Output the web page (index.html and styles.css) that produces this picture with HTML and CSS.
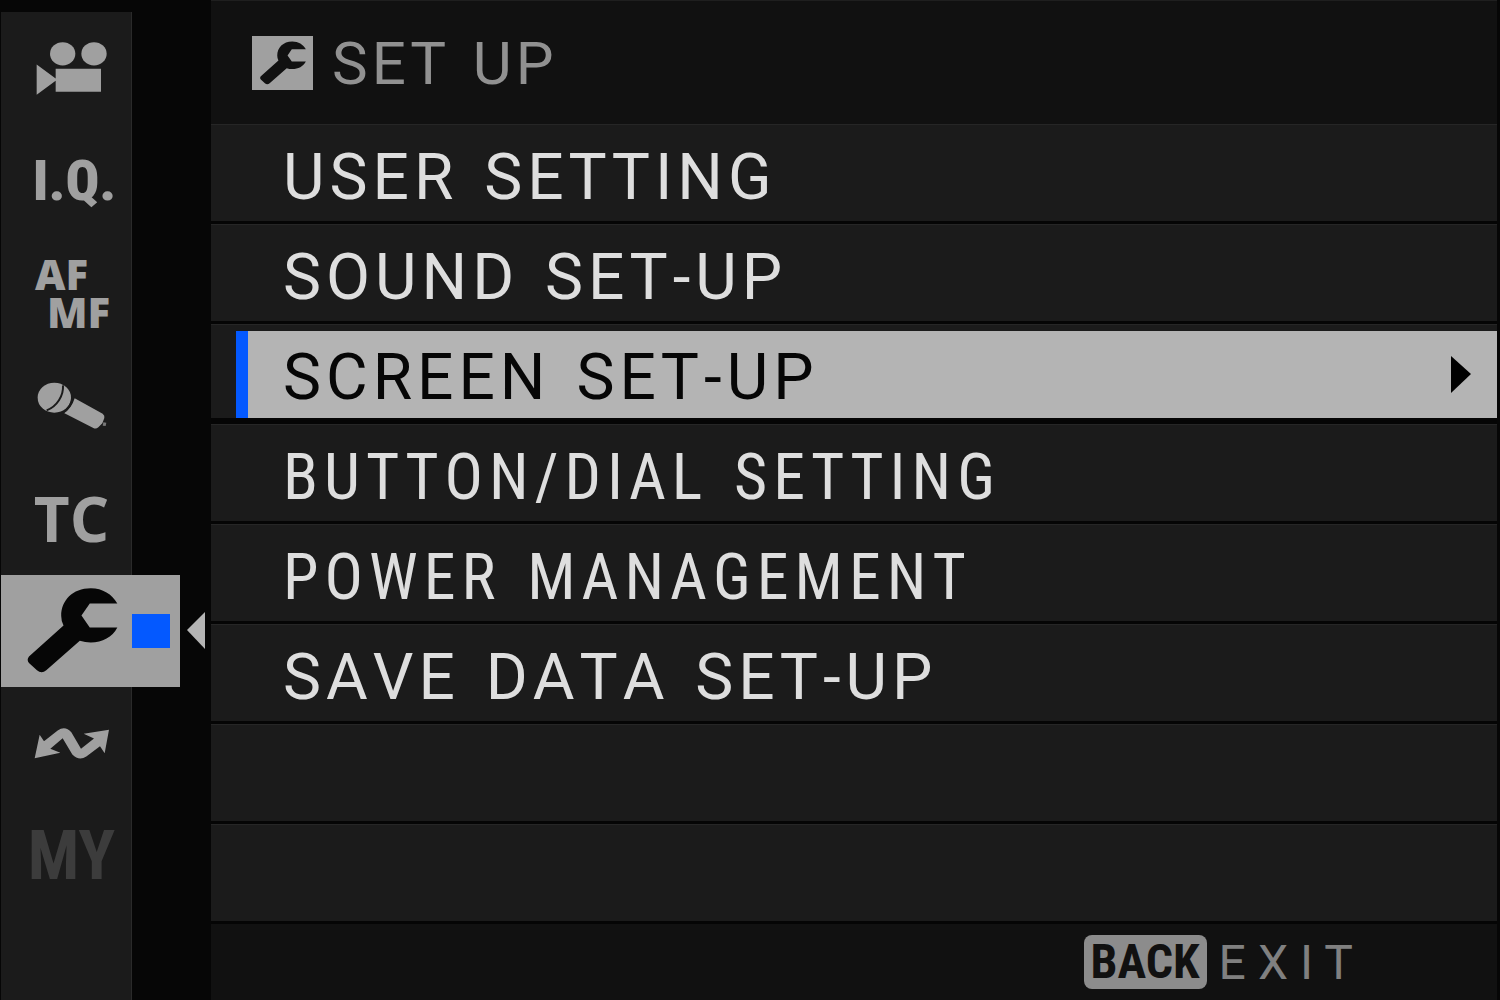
FILE: index.html
```html
<!DOCTYPE html>
<html lang="en">
<head>
	<meta charset="UTF-8">
	<title>SET UP</title>
	<link rel="stylesheet" href="styles.css">
</head>
<body>
	<svg class="defs" aria-hidden="true">
		<symbol id="wrench" viewBox="75 412 280 260">
			<path d="M350 461C334 433 306 415 270 415C215 415 181 452 181 498Q181 514 188 527L84 620Q76 630 84 640L108 662Q122 674 136 662L237 573Q253 578 270 578C305 578 335 562 350 533L267 533L242 497L267 461Z"/>
		</symbol>
	</svg>
	<nav class="tabs">
		<button class="tab" aria-label="Movie">
			<svg width="72" height="55" viewBox="108 122 216 164">
				<ellipse cx="188" cy="160" rx="38" ry="35"/>
				<ellipse cx="282" cy="160" rx="38" ry="35"/>
				<path d="M110 192L167 234V205H303V274H167V241L110 283Z"/>
			</svg>
		</button>
		<button class="tab iq">I.Q.</button>
		<button class="tab focus"><span>AF</span><span class="mf">MF</span></button>
		<button class="tab" aria-label="Audio">
			<svg width="72" height="48" viewBox="106 456 216 144">
				<ellipse cx="161" cy="503" rx="50" ry="45"/>
				<path d="M222 505L306 551Q313 556 311 564L305 580L293 592Q286 598 278 594L190 549Q213 535 222 505Z"/>
				<path class="tip" d="M308 577L317 578L315 588L306 587Z"/>
				<path class="band" d="M187 466C189 497 169 529 138 541M216 496Q214 532 184 550"/>
			</svg>
		</button>
		<button class="tab tc">TC</button>
		<div class="current">
			<button class="tab active" aria-label="Set up">
				<svg class="wrench" width="93" height="87"><use href="#wrench"/></svg>
				<span class="mark"></span>
			</button>
			<svg class="pointer" width="18" height="37" viewBox="0 0 18 37"><path d="M18 0V37L0 18Z"/></svg>
		</div>
		<button class="tab" aria-label="Network">
			<svg width="76" height="33" viewBox="102 80 228 98">
				<path d="M104 173L119 103L132 122L173 90Q195 74 214 95L243 145L282 114L251 100L327 88L314 158L300 137L259 168Q237 182 217 162L188 113L151 145L181 157Z"/>
			</svg>
		</button>
		<button class="tab my" disabled>MY</button>
	</nav>
	<main class="panel">
		<header class="title">
			<span class="badge"><svg width="48" height="44"><use href="#wrench"/></svg></span>
			<h1>SET UP</h1>
		</header>
		<ul class="menu">
			<li><button class="item">USER SETTING</button></li>
			<li><button class="item">SOUND SET-UP</button></li>
			<li class="on">
				<button class="item selected">
					SCREEN SET-UP
					<svg class="more" width="20" height="37" viewBox="0 0 20 37"><path d="M0 0L20 18L0 37Z"/></svg>
				</button>
			</li>
			<li><button class="item long">BUTTON/DIAL SETTING</button></li>
			<li><button class="item long">POWER MANAGEMENT</button></li>
			<li><button class="item">SAVE DATA SET-UP</button></li>
			<li></li>
			<li></li>
		</ul>
		<footer class="hint">
			<button class="back">BACK</button>
			<span>EXIT</span>
		</footer>
	</main>
</body>
</html>
```

FILE: styles.css
```css
*{box-sizing: border-box;}
body,h1,ul{
	margin: 0;
	padding: 0;
}
body{
	display: flex;
	min-height: 100vh;
	background: #060606;
	font-family: Roboto, "Liberation Sans", sans-serif;
}
button{
	border: 0;
	padding: 0;
	background: none;
	color: inherit;
	font: inherit;
}
.defs{
	position: absolute;
	width: 0;
	height: 0;
}
/* left tabs */
.tabs{
	flex: 0 0 210px;
	display: grid;
	grid-template-rows: repeat(8, 1fr);
	margin: 12px 0 0 1px;
	padding-bottom: 88px;
	background: linear-gradient(to right, #1b1b1b 130px, #2a2a2a 130px, #2a2a2a 131px, #060606 131px);
	color: #a0a0a0;
	fill: #a0a0a0;
}
.tab{
	display: flex;
	align-items: center;
	justify-content: center;
	width: 131px;
	padding-left: 10px;
	font-family: "Open Sans", sans-serif;
	font-weight: bold;
}
.iq,.my,.back{
	font-family: "Roboto Condensed", Roboto, sans-serif;
}
.iq{
	padding-left: 16px;
	font-size: 56px;
	font-weight: 900;
}
.focus{
	flex-direction: column;
	align-items: flex-start;
	padding-left: 34px;
	font-size: 42px;
	font-weight: 800;
	line-height: 38px;
}
.mf{
	padding-left: 12px;
}
.tc{
	font-size: 62px;
}
.my{
	color: #3c3c3c;
	font-size: 68px;
}
.band{
	fill: none;
	stroke: #1b1b1b;
	stroke-width: 6;
}
.tip{
	fill: #777;
}
.current{
	display: flex;
	align-items: center;
	gap: 7px;
}
.active{
	justify-content: flex-start;
	gap: 13px;
	align-self: stretch;
	width: 179px;
	padding-left: 25px;
	background: #a0a0a0;
}
.wrench{
	fill: #060606;
}
.mark{
	width: 38px;
	height: 34px;
	background: #0459ff;
}
.pointer{
	fill: #b4b4b4;
}
/* right panel */
.panel{
	flex: 1;
	display: flex;
	flex-direction: column;
	margin-right: 3px;
	background: #111;
}
.title{
	display: flex;
	align-items: center;
	gap: 19px;
	height: 124px;
	padding-left: 41px;
	border-top: 1px solid #1f1f1f;
	color: #919191;
}
.title h1{
	padding-top: 2px;
	font-size: 60px;
	font-weight: 400;
	letter-spacing: 4px;
	word-spacing: 5px;
}
.badge{
	display: flex;
	align-items: center;
	justify-content: center;
	width: 61px;
	height: 54px;
	background: #a0a0a0;
	fill: #111;
}
.menu{
	flex: 1;
	display: grid;
	grid-template-rows: repeat(8, 1fr);
	list-style: none;
}
.menu li{
	display: flex;
	border-top: 1px solid #262626;
	border-bottom: 3px solid #050505;
	background: #1b1b1b;
}
.menu .on{
	border-bottom-width: 6px;
}
.item{
	flex: 1;
	display: flex;
	align-items: center;
	justify-content: space-between;
	padding: 9px 26px 0 72px;
	color: #dedede;
	font-size: 64px;
	line-height: 76px;
	letter-spacing: 5px;
	word-spacing: 5px;
	font-kerning: none;
	text-align: left;
}
.long{
	font-family: "Roboto Condensed", Roboto, sans-serif;
	letter-spacing: 6px;
}
.selected{
	margin: 6px 0 0 25px;
	padding: 6px 26px 0 35px;
	border-left: 12px solid #0459ff;
	background: #b4b4b4;
	color: #060606;
}
.more{
	margin-bottom: 6px;
}
.hint{
	display: flex;
	align-items: center;
	justify-content: flex-end;
	gap: 12px;
	height: 76px;
	padding-right: 132px;
	color: #808080;
	font-size: 48px;
	letter-spacing: 12px;
}
.back{
	padding: 0 7px;
	border-radius: 8px;
	background: #8c8c8c;
	color: #111;
	font-weight: bold;
	line-height: 54px;
	letter-spacing: 0;
}
```
